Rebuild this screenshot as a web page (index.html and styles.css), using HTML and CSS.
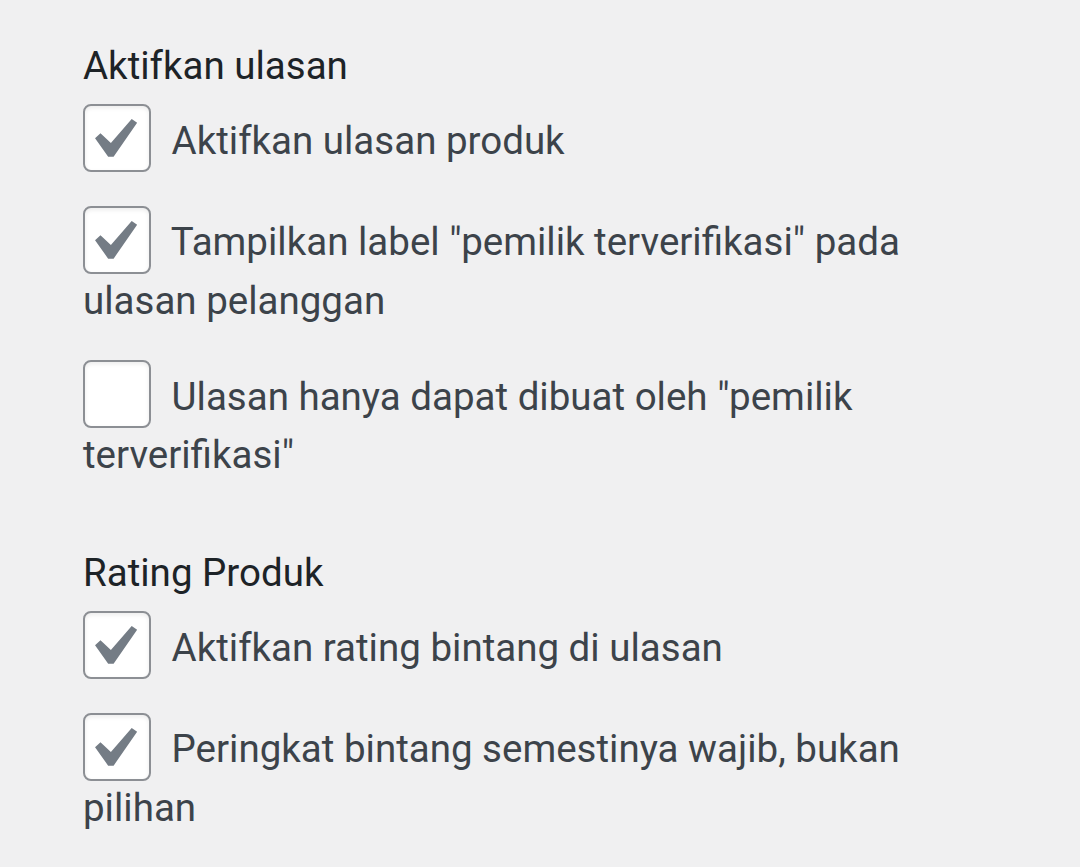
FILE: index.html
```html
<!DOCTYPE html>
<html lang="id">
<head>
  <meta charset="UTF-8">
  <meta name="viewport" content="width=device-width, initial-scale=1.0">
  <title>Pengaturan Ulasan</title>
  <link rel="stylesheet" href="styles.css">
</head>
<body>
  <div class="settings">
    <div class="setting-row">
      <div class="setting-title">Aktifkan ulasan</div>
      <fieldset class="setting-options">
        <label class="option"><span class="checkbox checked"><svg viewBox="3.3 1.7 15.8 15.8"><path d="M14.83 4.89l1.34.94-5.81 8.38H9.02L5.78 9.67l1.34-1.25 2.57 2.4z"/></svg></span> Aktifkan ulasan produk</label>
        <label class="option"><span class="checkbox checked"><svg viewBox="3.3 1.7 15.8 15.8"><path d="M14.83 4.89l1.34.94-5.81 8.38H9.02L5.78 9.67l1.34-1.25 2.57 2.4z"/></svg></span> Tampilkan label "pemilik terverifikasi" pada ulasan pelanggan</label>
        <label class="option"><span class="checkbox"></span> Ulasan hanya dapat dibuat oleh "pemilik terverifikasi"</label>
      </fieldset>
    </div>

    <div class="setting-row">
      <div class="setting-title">Rating Produk</div>
      <fieldset class="setting-options">
        <label class="option"><span class="checkbox checked"><svg viewBox="3.3 1.7 15.8 15.8"><path d="M14.83 4.89l1.34.94-5.81 8.38H9.02L5.78 9.67l1.34-1.25 2.57 2.4z"/></svg></span> Aktifkan rating bintang di ulasan</label>
        <label class="option"><span class="checkbox checked"><svg viewBox="3.3 1.7 15.8 15.8"><path d="M14.83 4.89l1.34.94-5.81 8.38H9.02L5.78 9.67l1.34-1.25 2.57 2.4z"/></svg></span> Peringkat bintang semestinya wajib, bukan pilihan</label>
      </fieldset>
    </div>
  </div>
</body>
</html>
```

FILE: styles.css
```css
body {
  margin: 0;
  background-color: #f0f0f1;
  font-family: Roboto, "Liberation Sans", sans-serif;
  font-size: 38.5px;
  line-height: 53px;
  color: #3c434a;
}
.settings {
  width: 850px;
  padding: 39px 0 0 83px;
}
.setting-row {
  margin-bottom: 65px;
}
.setting-title {
  color: #1d2327;
  margin-bottom: 22px;
}
.setting-options {
  margin: 0;
  padding: 0;
  border: none;
}
.option {
  display: block;
  margin-bottom: 43px;
}
.option:last-child {
  margin-bottom: 0;
}
.checkbox {
  display: inline-block;
  box-sizing: border-box;
  width: 68px;
  height: 68px;
  margin: -11px 11px 0 0;
  vertical-align: middle;
  background: #fff;
  border: 2px solid #8c8f94;
  border-radius: 8px;
  box-shadow: inset 0 2px 4px rgba(0, 0, 0, 0.08);
}
.checkbox svg {
  display: block;
  width: 64px;
  height: 64px;
  fill: #747c85;
}
```
